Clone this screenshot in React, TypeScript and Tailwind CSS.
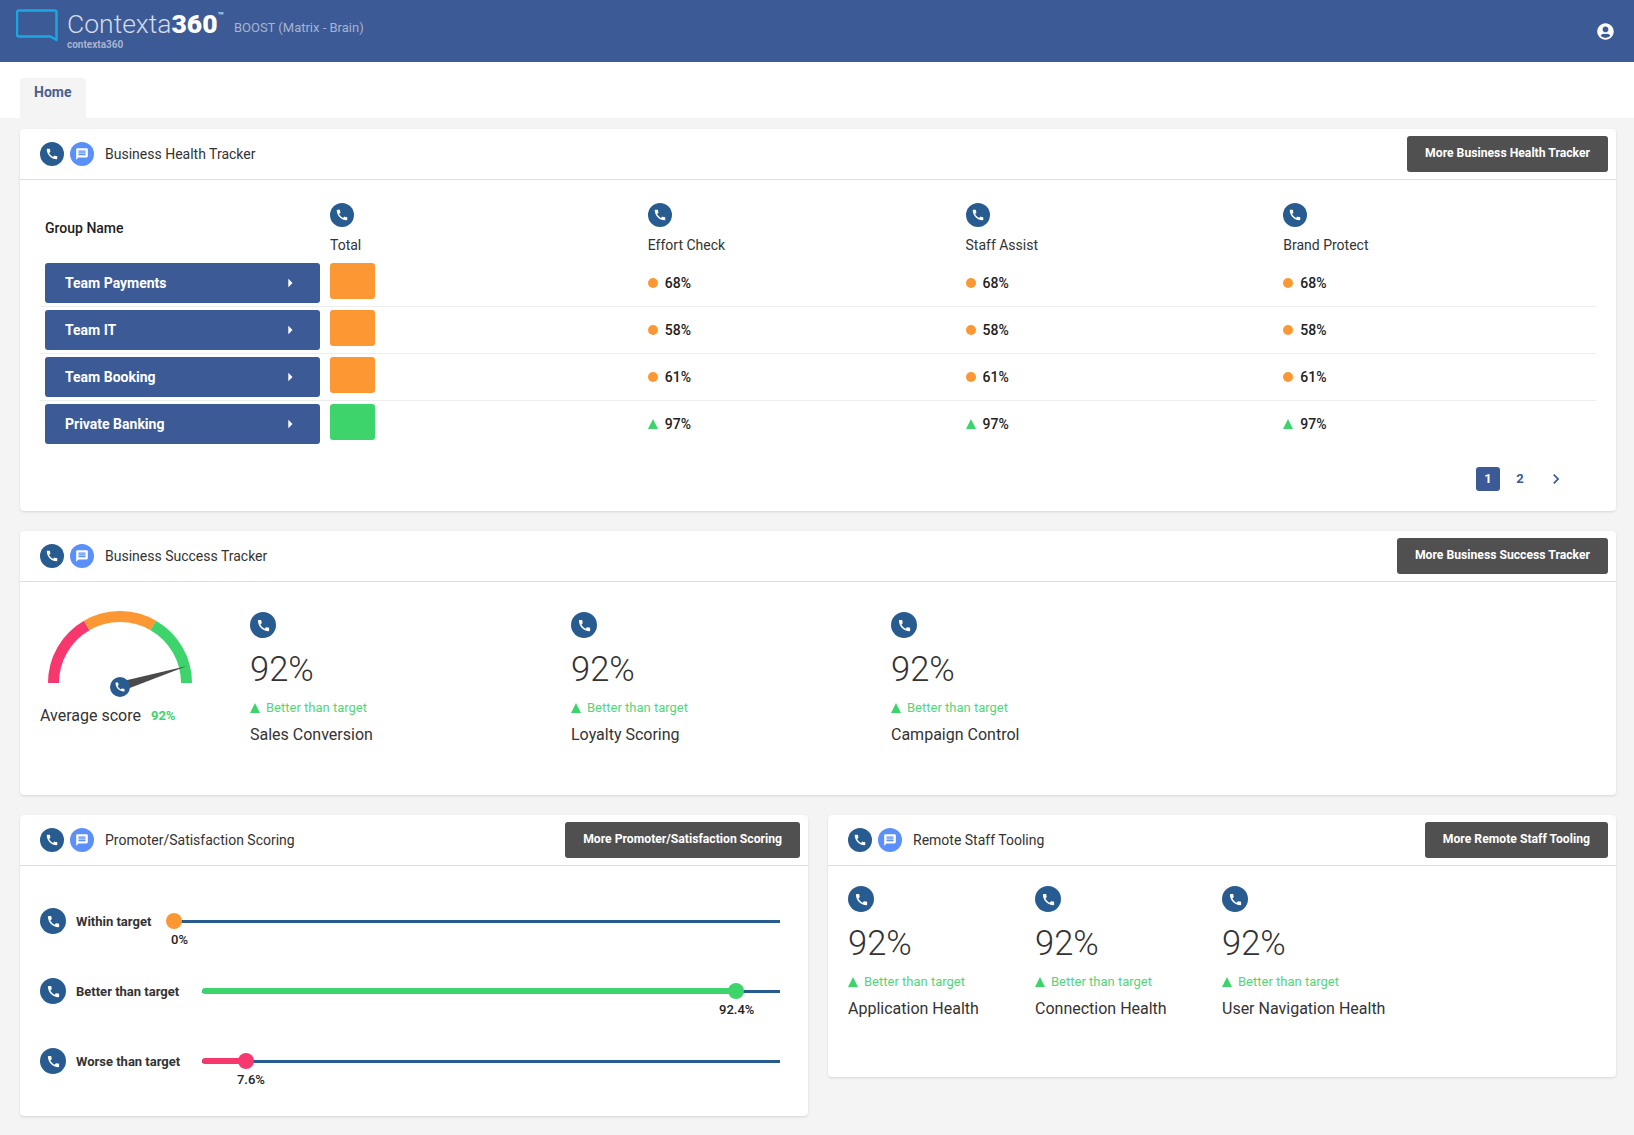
import { FaUserCircle } from "react-icons/fa";
import { MdCall, MdChevronRight, MdMessage, MdArrowRight } from "react-icons/md";

const rows = [
  { name: "Team Payments", value: "68%", good: false },
  { name: "Team IT", value: "58%", good: false },
  { name: "Team Booking", value: "61%", good: false },
  { name: "Private Banking", value: "97%", good: true },
];

function PhoneIcon({ size = "w-6 h-6", icon = 14 }: { size?: string; icon?: number }) {
  return (
    <div className={`${size} rounded-full bg-[#285b8f] flex items-center justify-center text-white shrink-0`}>
      <MdCall size={icon} />
    </div>
  );
}

function Triangle() {
  return <div className="w-0 h-0 border-l-[5.5px] border-r-[5.5px] border-b-[10px] border-l-transparent border-r-transparent border-b-[#3dd46b]" />;
}

function CardHeader({ title, more }: { title: string; more: string }) {
  return (
    <div className="h-[51px] flex items-center justify-between border-b border-[#dfdfdf] pl-5 pr-2">
      <div className="flex items-center">
        <PhoneIcon />
        <div className="w-6 h-6 ml-1.5 rounded-full bg-[#5b8ff9] flex items-center justify-center text-white">
          <MdMessage size={14} />
        </div>
        <span className="ml-[11px] text-sm text-[#333]">{title}</span>
      </div>
      <button className="h-9 px-[18px] pb-0.5 bg-[#505050] rounded-[3px] text-white text-[12.2px] font-bold">{more}</button>
    </div>
  );
}

function Metric({ label, width }: { label: string; width: string }) {
  return (
    <div className={width}>
      <PhoneIcon size="w-[26px] h-[26px]" icon={15} />
      <div className="mt-[11px] h-10 leading-10 text-[34.5px] font-light text-[#333]">92%</div>
      <div className="mt-2.5 h-[18px] flex items-center text-[13px] text-[#52d67c]">
        <Triangle />
        <span className="ml-1.5">Better than target</span>
      </div>
      <div className="mt-1.5 h-6 leading-6 text-base text-[#333]">{label}</div>
    </div>
  );
}

function ScoreSlider({
  label,
  labelWidth,
  value,
  color,
  text,
  textClass,
}: {
  label: string;
  labelWidth: string;
  value: number;
  color: string;
  text: string;
  textClass: string;
}) {
  return (
    <div className="flex items-center h-[26px]">
      <PhoneIcon size="w-[26px] h-[26px]" icon={15} />
      <div className={`ml-2.5 pt-0.5 text-[13px] font-bold text-[#333] ${labelWidth}`}>{label}</div>
      <div className="relative flex-1 h-[3px] bg-[#285b8f]">
        <div className={`absolute left-0 top-[-1.5px] h-1.5 rounded-full ${color}`} style={{ width: `${value}%` }} />
        <div className="absolute top-[-6.5px] w-0 h-0" style={{ left: `${value}%` }}>
          <div className={`w-4 h-4 -ml-2 rounded-full ${color}`} />
          <div className={`absolute top-[17px] text-[13px] font-medium text-[#222] whitespace-nowrap ${textClass}`}>{text}</div>
        </div>
      </div>
    </div>
  );
}

function Gauge() {
  return (
    <div className="w-[210px] shrink-0 -mt-px">
      <div className="relative ml-2 w-36 h-[86px]">
        <svg width="144" height="86" viewBox="0 0 144 86" fill="none">
          <path d="M5.5 72A66.5 66.5 0 0 1 38.75 14.4" stroke="#f7386f" strokeWidth="11" />
          <path d="M38.75 14.4A66.5 66.5 0 0 1 105.25 14.4" stroke="#fb9833" strokeWidth="11" />
          <path d="M105.25 14.4A66.5 66.5 0 0 1 138.5 72" stroke="#3dd46b" strokeWidth="11" />
          <polygon points="139,55 71,71 74,80" fill="#4a4a4a" />
        </svg>
        <div className="absolute left-[62px] top-[66px]">
          <PhoneIcon size="w-5 h-5" icon={12} />
        </div>
      </div>
      <div className="mt-[7px] flex items-center h-6">
        <span className="text-base text-[#333]">Average score</span>
        <span className="ml-2.5 text-[13px] font-bold text-[#3dd46b]">92%</span>
      </div>
    </div>
  );
}

export default function App() {
  return (
    <div className="min-h-screen bg-[#f4f4f4] font-['Roboto',sans-serif] pb-[19px]">
      <div className="h-[62px] bg-[#3c5a96] flex items-center justify-between pl-4 pr-[20px]">
        <div className="flex items-start">
          <svg width="42" height="33" viewBox="0 0 42 33" fill="none" className="mt-[-3px]">
            <path d="M3 1.5H38.5A2 2 0 0 1 40.5 3.5V31L34.5 27.5H3A2 2 0 0 1 1 25.5V3.5A2 2 0 0 1 3 1.5Z" stroke="#1ba8e2" strokeWidth="2.5" strokeLinejoin="round" />
          </svg>
          <div className="ml-[9px] mt-[-3px]">
            <div className="flex items-start h-[28px] text-[#d5dbe8]">
              <span className="text-[26.5px] leading-[30px] font-light">Contexta</span>
              <span className="text-[26.5px] leading-[30px] font-black text-white">360</span>
              <span className="text-[10px] leading-3 font-bold mt-[1px]">™</span>
            </div>
            <div className="text-[10px] leading-3 font-bold text-[#a7b4d0] mt-0.5">contexta360</div>
          </div>
          <div className="ml-[10px] mt-1.5 text-[13px] text-[#a7b4d0]">BOOST (Matrix - Brain)</div>
        </div>
        <FaUserCircle size={17} className="text-white" />
      </div>

      <div className="h-14 bg-white flex items-end pl-5">
        <div className="w-[66px] h-10 bg-[#f4f4f4] rounded-t text-sm font-bold text-[#4a5f8e] pl-3.5 pt-1">Home</div>
      </div>

      <div className="pl-5 pr-[18px] pt-[11px] flex flex-col gap-5">
        <div className="bg-white rounded shadow-sm">
          <CardHeader title="Business Health Tracker" more="More Business Health Tracker" />
          <div className="px-5 pt-[23px] pb-5">
            <div className="grid grid-cols-[285px_repeat(4,1fr)]">
              <div className="pl-[5px] pt-[15px] text-sm font-medium text-[#222]">Group Name</div>
              {["Total", "Effort Check", "Staff Assist", "Brand Protect"].map((col) => (
                <div key={col} className="pl-[5px] pb-[5px]">
                  <PhoneIcon />
                  <div className="mt-2 h-5 leading-5 text-sm text-[#333]">{col}</div>
                </div>
              ))}
            </div>
            {rows.map((row, i) => (
              <div
                key={row.name}
                className={`grid grid-cols-[285px_repeat(4,1fr)] py-[3px] ${i < rows.length - 1 ? "border-b border-[#eeeeee]" : ""}`}
              >
                <div className="px-[5px]">
                  <div className="h-10 bg-[#3c5a96] rounded-[3px] flex items-center justify-between pl-5 pr-5 text-white text-sm font-bold">
                    <span>{row.name}</span>
                    <MdArrowRight size={20} />
                  </div>
                </div>
                <div className="pl-[5px]">
                  <div className={`w-[45px] h-9 rounded-[3px] ${row.good ? "bg-[#3dd46b]" : "bg-[#fb9833]"}`} />
                </div>
                {[0, 1, 2].map((c) => (
                  <div key={c} className="pl-[5px] h-10 flex items-center">
                    {row.good ? <Triangle /> : <div className="w-2.5 h-2.5 rounded-full bg-[#fb9833]" />}
                    <span className="ml-[7px] text-sm font-medium text-[#222]">{row.value}</span>
                  </div>
                ))}
              </div>
            ))}
            <div className="mt-5 flex items-center justify-end pr-7 text-[#3c5a96] text-[13px] font-bold">
              <div className="w-6 h-6 bg-[#3c5a96] rounded-[3px] text-white flex items-center justify-center">1</div>
              <div className="w-6 h-6 ml-2 flex items-center justify-center">2</div>
              <div className="w-6 h-6 ml-3 flex items-center justify-center">
                <MdChevronRight size={20} />
              </div>
            </div>
          </div>
        </div>

        <div className="bg-white rounded shadow-sm">
          <CardHeader title="Business Success Tracker" more="More Business Success Tracker" />
          <div className="flex pl-5 pt-[30px] pb-12">
            <Gauge />
            <Metric label="Sales Conversion" width="w-[321px]" />
            <Metric label="Loyalty Scoring" width="w-[320px]" />
            <Metric label="Campaign Control" width="w-[320px]" />
          </div>
        </div>

        <div className="flex items-start gap-5">
          <div className="flex-1 bg-white rounded shadow-sm">
            <CardHeader title="Promoter/Satisfaction Scoring" more="More Promoter/Satisfaction Scoring" />
            <div className="flex flex-col gap-11 pl-5 pr-7 pt-[42px] pb-[42px]">
              <ScoreSlider label="Within target" labelWidth="w-[98px]" value={0} color="bg-[#fb9833]" text="0%" textClass="left-[-3px]" />
              <ScoreSlider label="Better than target" labelWidth="w-[126px]" value={92.4} color="bg-[#3dd46b]" text="92.4%" textClass="left-[-17px]" />
              <ScoreSlider label="Worse than target" labelWidth="w-[126px]" value={7.6} color="bg-[#f7386f]" text="7.6%" textClass="left-[-9px]" />
            </div>
          </div>
          <div className="flex-1 bg-white rounded shadow-sm">
            <CardHeader title="Remote Staff Tooling" more="More Remote Staff Tooling" />
            <div className="flex pl-5 pt-5 pb-[56px]">
              <Metric label="Application Health" width="w-[187px]" />
              <Metric label="Connection Health" width="w-[187px]" />
              <Metric label="User Navigation Health" width="w-[187px]" />
            </div>
          </div>
        </div>
      </div>
    </div>
  );
}
